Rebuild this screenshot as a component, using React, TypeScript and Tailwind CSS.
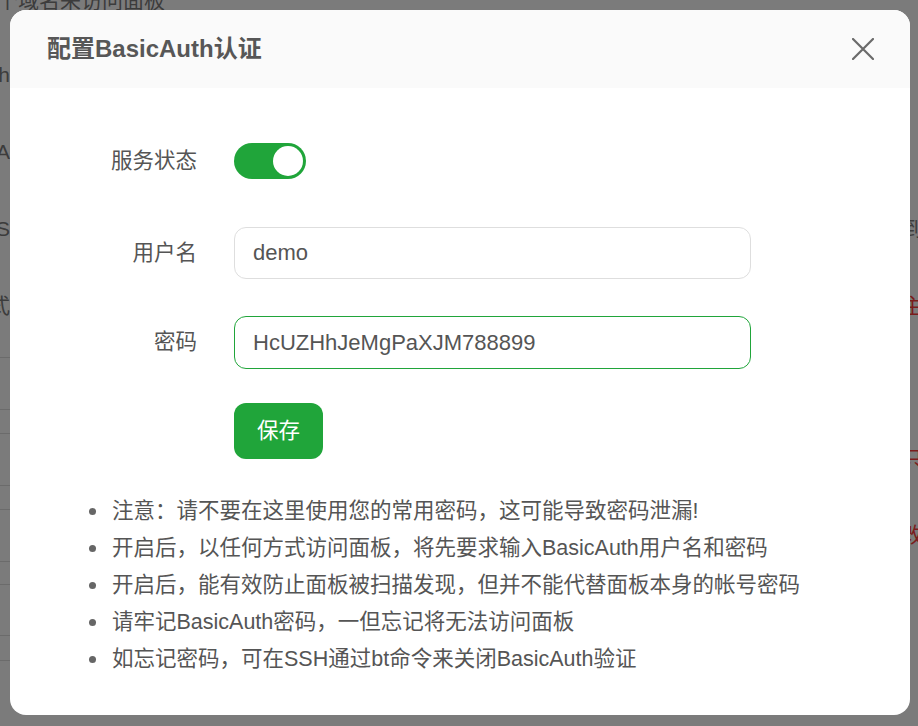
import React from "react";

function LeftFrag({ text }: { text: string }) {
  return (
    <div className="w-[10px] overflow-hidden flex justify-end whitespace-nowrap">
      <span>{text}</span>
    </div>
  );
}

function RightFrag({ text, red }: { text: string; red?: boolean }) {
  return (
    <div className="w-[16px] overflow-hidden whitespace-nowrap">
      <span className={red ? "text-[#7a1c1c]" : "text-[#3c3c3c]"}>{text}</span>
    </div>
  );
}

const notes = [
  "注意：请不要在这里使用您的常用密码，这可能导致密码泄漏!",
  "开启后，以任何方式访问面板，将先要求输入BasicAuth用户名和密码",
  "开启后，能有效防止面板被扫描发现，但并不能代替面板本身的帐号密码",
  "请牢记BasicAuth密码，一但忘记将无法访问面板",
  "如忘记密码，可在SSH通过bt命令来关闭BasicAuth验证",
];

export default function App() {
  return (
    <div className="relative w-[918px] h-[726px] overflow-hidden bg-[#7b7b7b] text-[#3c3c3c] text-[21px] font-['Liberation_Sans','Noto_Sans_CJK_SC',sans-serif]">
      {/* underlying page (dimmed) */}
      <div className="flex flex-col">
        <div className="h-[36px]">
          <div className="-mt-[10px] -ml-[3px] leading-[21px] whitespace-nowrap">个域名来访问面板</div>
        </div>
        <div className="h-[77px] flex items-center justify-between">
          <LeftFrag text="h" />
          <RightFrag text="" />
        </div>
        <div className="h-[77px] flex items-center justify-between">
          <LeftFrag text="A" />
          <RightFrag text="" />
        </div>
        <div className="h-[77px] flex items-center justify-between">
          <LeftFrag text="S" />
          <RightFrag text="到" />
        </div>
        <div className="h-[77px] flex items-center justify-between">
          <LeftFrag text="式" />
          <RightFrag text="主" red />
        </div>
        <div className="h-[13px]" />
        {[
          { h: "h-[52px]", r: "" },
          { h: "h-[24px]", r: "" },
          { h: "h-[52px]", r: "只" },
          { h: "h-[24px]", r: "" },
          { h: "h-[52px]", r: "改" },
          { h: "h-[23px]", r: "" },
          { h: "h-[51px]", r: "" },
          { h: "h-[25px]", r: "" },
          { h: "h-[65px]", r: "" },
        ].map((row, i) => (
          <div key={i} className={`${row.h} flex items-center justify-between`}>
            <div className="w-[10px] h-full border-t border-[#6b6b6b]" />
            <RightFrag text={row.r} red />
          </div>
        ))}
      </div>

      {/* modal */}
      <div className="absolute left-[10px] top-[10px] w-[900px] h-[705px] rounded-[16px] bg-white overflow-hidden flex flex-col">
        <div className="h-[78px] bg-[#fafafa] flex items-center justify-between pl-[37px] pr-[36px]">
          <div className="text-[24px] font-semibold text-[#575757]">配置BasicAuth认证</div>
          <svg width="22" height="22" viewBox="0 0 22 22" fill="none">
            <path d="M1 1L21 21M21 1L1 21" stroke="#6a6a6a" strokeWidth="2.2" strokeLinecap="round" />
          </svg>
        </div>

        <div className="flex flex-col pt-[55px] text-[#555555] text-[21.5px]">
          <div className="flex items-center h-[36px]">
            <div className="w-[187px] text-right">服务状态</div>
            <div className="ml-[37px] w-[72px] h-[36px] rounded-full bg-[#20a53a] flex items-center justify-end pr-[3px]">
              <div className="w-[30px] h-[30px] rounded-full bg-white" />
            </div>
          </div>

          <div className="flex items-center mt-[48px]">
            <div className="w-[187px] text-right">用户名</div>
            <input
              readOnly
              defaultValue="demo"
              className="ml-[37px] w-[517px] h-[52px] rounded-[12px] border-[1.5px] border-[#dedede] bg-white px-[18px] text-[22px] text-[#555555] outline-none"
            />
          </div>

          <div className="flex items-center mt-[37px]">
            <div className="w-[187px] text-right">密码</div>
            <input
              readOnly
              defaultValue="HcUZHhJeMgPaXJM788899"
              className="ml-[37px] w-[517px] h-[53px] rounded-[12px] border-[1.5px] border-[#20a53a] bg-white px-[18px] text-[22px] text-[#555555] outline-none"
            />
          </div>

          <div className="flex mt-[34px]">
            <div className="w-[187px]" />
            <button className="ml-[37px] w-[89px] h-[56px] rounded-[12px] bg-[#20a53a] text-white text-[21.5px]">
              保存
            </button>
          </div>

          <ul className="mt-[34px] flex flex-col">
            {notes.map((n) => (
              <li key={n} className="flex items-center h-[37px] whitespace-nowrap">
                <span className="ml-[79px] mr-[16px] w-[7px] h-[7px] rounded-full bg-[#666666] shrink-0" />
                <span>{n}</span>
              </li>
            ))}
          </ul>
        </div>
      </div>
    </div>
  );
}
